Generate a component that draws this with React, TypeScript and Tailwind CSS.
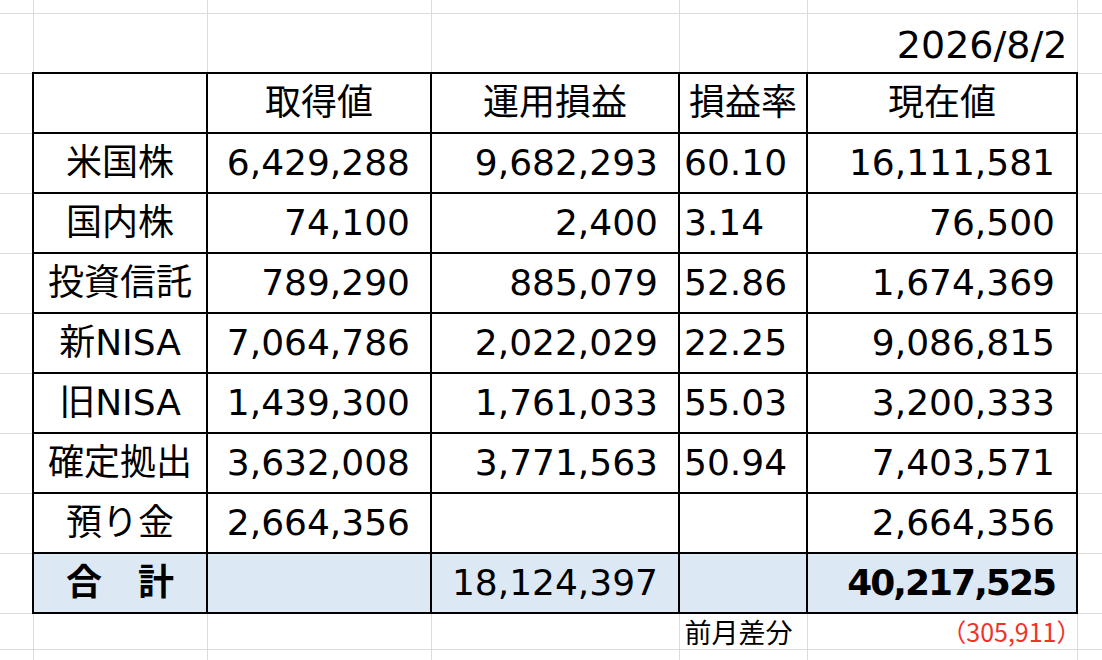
const rows: string[][] = [
  ["米国株", "6,429,288", "9,682,293", "60.10", "16,111,581"],
  ["国内株", "74,100", "2,400", "3.14", "76,500"],
  ["投資信託", "789,290", "885,079", "52.86", "1,674,369"],
  ["新NISA", "7,064,786", "2,022,029", "22.25", "9,086,815"],
  ["旧NISA", "1,439,300", "1,761,033", "55.03", "3,200,333"],
  ["確定拠出", "3,632,008", "3,771,563", "50.94", "7,403,571"],
  ["預り金", "2,664,356", "", "", "2,664,356"],
]

// plain sheet cell vs. bordered table cell
const g = "border-r border-b border-[#dcdcdc] p-0"
const t = "border-2 border-black p-0 align-middle"

export default function App() {
  return (
    <div className="w-[1102px] h-[660px] overflow-hidden bg-white text-black font-['DejaVu_Sans','Noto_Sans_CJK_JP',sans-serif]">
      <table className="table-fixed border-collapse w-[1102px] leading-none">
        <colgroup>
          <col className="w-[33px]" />
          <col className="w-[174px]" />
          <col className="w-[224px]" />
          <col className="w-[248px]" />
          <col className="w-[128px]" />
          <col className="w-[270px]" />
          <col className="w-[25px]" />
        </colgroup>
        <tbody>
          <tr className="h-[13px]">
            <td className={g} />
            <td className={g} />
            <td className={g} />
            <td className={g} />
            <td className={g} />
            <td className={g} />
            <td className={g} />
          </tr>
          <tr className="h-[60px]">
            <td className={g} />
            <td className={g} />
            <td className={g} />
            <td className={g} />
            <td className={g} />
            <td className={`${g} text-right pr-[9px] pt-[4px] text-[38px]`}>2026/8/2</td>
            <td className={g} />
          </tr>
          {/* header */}
          <tr className="h-[60px] text-[36px]">
            <td className={g} />
            <td className={t} />
            <td className={`${t} text-center`}>取得値</td>
            <td className={`${t} text-center`}>運用損益</td>
            <td className={`${t} text-center`}>損益率</td>
            <td className={`${t} text-center`}>現在値</td>
            <td className={g} />
          </tr>
          {rows.map((r) => (
            <tr key={r[0]} className="h-[60px] text-[36px]">
              <td className={g} />
              <td className={`${t} text-center`}>{r[0]}</td>
              <td className={`${t} text-right pr-[20px]`}>{r[1]}</td>
              <td className={`${t} text-right pr-[20px]`}>{r[2]}</td>
              <td className={`${t} text-left pl-[4px]`}>{r[3]}</td>
              <td className={`${t} text-right pr-[21px]`}>{r[4]}</td>
              <td className={g} />
            </tr>
          ))}
          {/* total */}
          <tr className="h-[60px] text-[36px]">
            <td className={g} />
            <td className={`${t} bg-[#dde8f5] text-center font-bold`}>合　計</td>
            <td className={`${t} bg-[#dde8f5]`} />
            <td className={`${t} bg-[#dde8f5] text-right pr-[20px]`}>18,124,397</td>
            <td className={`${t} bg-[#dde8f5]`} />
            <td className={`${t} bg-[#dde8f5] text-right pr-[21px] font-bold tracking-[-2px]`}>40,217,525</td>
            <td className={g} />
          </tr>
          <tr className="h-[36px]">
            <td className={g} />
            <td className={g} />
            <td className={g} />
            <td className={g} />
            <td className={`${g} pl-[5px] text-[27px] font-['Noto_Sans_CJK_JP',sans-serif]`}>前月差分</td>
            <td className={`${g} text-right pr-[5px] text-[25px] text-[#ee3328] font-['Noto_Sans_CJK_JP',sans-serif]`}>
              <span className="mr-[-10px]">（305,911）</span>
            </td>
            <td className={g} />
          </tr>
          <tr className="h-[20px]">
            <td className={g} />
            <td className={g} />
            <td className={g} />
            <td className={g} />
            <td className={g} />
            <td className={g} />
            <td className={g} />
          </tr>
        </tbody>
      </table>
    </div>
  )
}
